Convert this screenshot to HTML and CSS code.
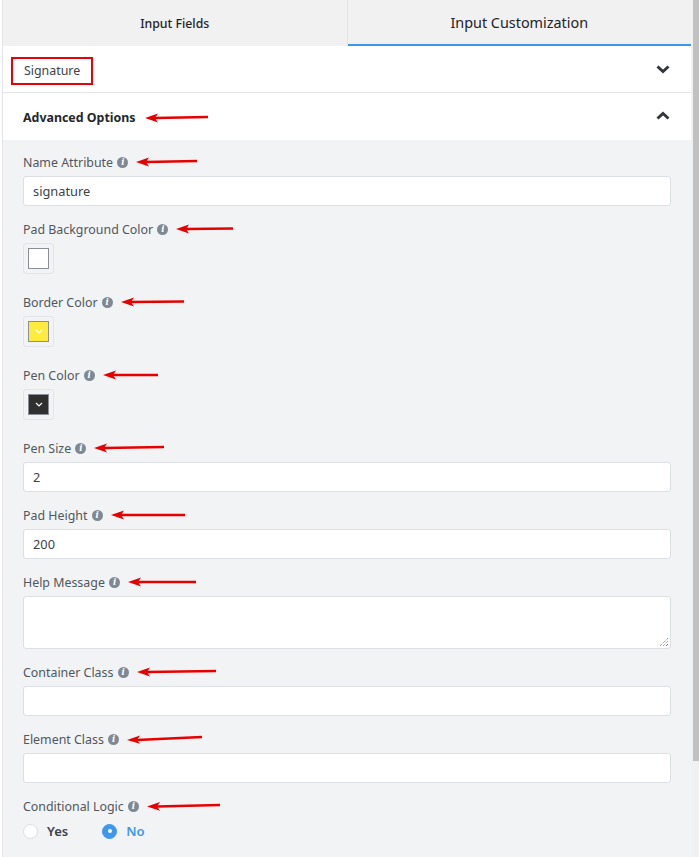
FILE: index.html
```html
<!DOCTYPE html>
<html>
<head>
<meta charset="utf-8">
<link rel="stylesheet" href="styles.css">
</head>
<body>
<div class="frame">
  <div class="panel">
    <div class="tabs">
      <div class="tab tab-left">Input Fields</div>
      <div class="tab tab-active">Input Customization</div>
    </div>

    <div class="row row-signature">
      <span class="mark-box">Signature</span>
      <svg class="chev" width="14" height="9" viewBox="0 0 14 9"><polyline points="1.5,1.5 7,6.5 12.5,1.5" fill="none" stroke="#33363b" stroke-width="3"/></svg>
    </div>

    <div class="row row-adv">
      <span class="adv-title">Advanced Options</span>
      <svg class="arrow" width="64" height="10" viewBox="0 0 64 10"><polygon points="0,5 13,0.5 10,5 13,9.5" fill="#e60000"/><line x1="10" y1="5" x2="63" y2="4" stroke="#e60000" stroke-width="2.4"/></svg>
      <svg class="chev chev-up" width="14" height="9" viewBox="0 0 14 9"><polyline points="1.5,7.5 7,2.5 12.5,7.5" fill="none" stroke="#33363b" stroke-width="3"/></svg>
    </div>

    <div class="content">
      <div class="field">
        <div class="label">Name Attribute <span class="info">i</span><svg class="arrow" width="62" height="10" viewBox="0 0 62 10"><polygon points="0,5 13,0.5 10,5 13,9.5" fill="#e60000"/><line x1="10" y1="5" x2="61" y2="4" stroke="#e60000" stroke-width="2.4"/></svg></div>
        <div class="input">signature</div>
      </div>

      <div class="field field-swatch">
        <div class="label">Pad Background Color <span class="info">i</span><svg class="arrow" width="58" height="10" viewBox="0 0 58 10"><polygon points="0,5 13,0.5 10,5 13,9.5" fill="#e60000"/><line x1="10" y1="5" x2="57" y2="4.5" stroke="#e60000" stroke-width="2.4"/></svg></div>
        <div class="swatch"><span class="swatch-in sw-white"></span></div>
      </div>

      <div class="field field-swatch">
        <div class="label">Border Color <span class="info">i</span><svg class="arrow" width="64" height="10" viewBox="0 0 64 10"><polygon points="0,5 13,0.5 10,5 13,9.5" fill="#e60000"/><line x1="10" y1="5" x2="63" y2="4.5" stroke="#e60000" stroke-width="2.4"/></svg></div>
        <div class="swatch"><span class="swatch-in sw-yellow"><svg width="8" height="5" viewBox="0 0 8 5"><polyline points="1,1 4,4 7,1" fill="none" stroke="#fff" stroke-width="1.2"/></svg></span></div>
      </div>

      <div class="field field-swatch">
        <div class="label">Pen Color <span class="info">i</span><svg class="arrow" width="56" height="10" viewBox="0 0 56 10"><polygon points="0,5 13,0.5 10,5 13,9.5" fill="#e60000"/><line x1="10" y1="5" x2="55" y2="5" stroke="#e60000" stroke-width="2.4"/></svg></div>
        <div class="swatch"><span class="swatch-in sw-dark"><svg width="8" height="5" viewBox="0 0 8 5"><polyline points="1,1 4,4 7,1" fill="none" stroke="#fff" stroke-width="1.2"/></svg></span></div>
      </div>

      <div class="field">
        <div class="label">Pen Size <span class="info">i</span><svg class="arrow" width="71" height="10" viewBox="0 0 71 10"><polygon points="0,5 13,0.5 10,5 13,9.5" fill="#e60000"/><line x1="10" y1="5" x2="70" y2="4" stroke="#e60000" stroke-width="2.4"/></svg></div>
        <div class="input">2</div>
      </div>

      <div class="field">
        <div class="label">Pad Height <span class="info">i</span><svg class="arrow" width="75" height="10" viewBox="0 0 75 10"><polygon points="0,5 13,0.5 10,5 13,9.5" fill="#e60000"/><line x1="10" y1="5" x2="74" y2="5" stroke="#e60000" stroke-width="2.4"/></svg></div>
        <div class="input">200</div>
      </div>

      <div class="field">
        <div class="label">Help Message <span class="info">i</span><svg class="arrow" width="69" height="10" viewBox="0 0 69 10"><polygon points="0,5 13,0.5 10,5 13,9.5" fill="#e60000"/><line x1="10" y1="5" x2="68" y2="5" stroke="#e60000" stroke-width="2.4"/></svg></div>
        <div class="textarea">
          <svg class="grip" width="10" height="10" viewBox="0 0 10 10"><line x1="1" y1="9" x2="9" y2="1" stroke="#777" stroke-width="1" stroke-dasharray="1 1"/><line x1="4" y1="9" x2="9" y2="4" stroke="#777" stroke-width="1" stroke-dasharray="1 1"/><line x1="7" y1="9" x2="9" y2="7" stroke="#777" stroke-width="1"/></svg>
        </div>
      </div>

      <div class="field">
        <div class="label">Container Class <span class="info">i</span><svg class="arrow" width="80" height="10" viewBox="0 0 80 10"><polygon points="0,5 13,0.5 10,5 13,9.5" fill="#e60000"/><line x1="10" y1="5" x2="79" y2="4" stroke="#e60000" stroke-width="2.4"/></svg></div>
        <div class="input"></div>
      </div>

      <div class="field">
        <div class="label">Element Class <span class="info">i</span><svg class="arrow" width="76" height="10" viewBox="0 0 76 10"><polygon points="0,6 13,1.5 10,6 13,9.8" fill="#e60000"/><line x1="10" y1="6" x2="75" y2="3" stroke="#e60000" stroke-width="2.4"/></svg></div>
        <div class="input"></div>
      </div>

      <div class="field">
        <div class="label">Conditional Logic <span class="info">i</span><svg class="arrow" width="74" height="10" viewBox="0 0 74 10"><polygon points="0,5.5 13,1 10,5.5 13,9.8" fill="#e60000"/><line x1="10" y1="5.5" x2="73" y2="4" stroke="#e60000" stroke-width="2.4"/></svg></div>
        <div class="radios">
          <label class="radio"><span class="dot"></span><span class="radio-text">Yes</span></label>
          <label class="radio radio-on"><span class="dot"></span><span class="radio-text">No</span></label>
        </div>
      </div>
    </div>
  </div>
  <div class="scrollbar"><div class="thumb"></div></div>
</div>
</body>
</html>
```

FILE: styles.css
```css
* { box-sizing: border-box; }

html, body {
  margin: 0;
  padding: 0;
  height: 100%;
}

body {
  font-family: "Noto Sans", "Open Sans", sans-serif;
  font-size: 12.4px;
  color: #3c434a;
  background: #ffffff;
}

.frame {
  display: flex;
  height: 857px;
  padding-left: 2px;
}

.panel {
  flex: 1;
  display: flex;
  flex-direction: column;
  background: #f2f3f5;
  border-left: 1px solid #e2e4e7;
  overflow: hidden;
}

.scrollbar {
  width: 8px;
  background: #f1f1f1;
  padding-left: 2px;
}

.thumb {
  width: 6px;
  height: 761px;
  background: #c1c1c1;
}

.tabs {
  display: flex;
  height: 46px;
  background: #f1f1f2;
}

.tab {
  flex: 1;
  display: flex;
  align-items: center;
  justify-content: center;
  color: #1d2327;
}

.tab-left {
  font-size: 12.3px;
  font-weight: 500;
  border-right: 1px solid #e4e4e6;
}

.tab-active {
  font-size: 14.4px;
  border-bottom: 2px solid #3d97ee;
  padding-top: 1px;
}

.row {
  display: flex;
  align-items: center;
  background: #ffffff;
  height: 47px;
  position: relative;
}

.row-signature {
  padding-left: 8px;
  border-bottom: 1px solid #e3e4e6;
}

.mark-box {
  border: 2.5px solid #e8000b;
  padding: 0 11px 0 11px;
  height: 28px;
  display: flex;
  align-items: center;
  color: #3c434a;
  font-size: 12.4px;
  margin-top: 3px;
}

.row-adv {
  padding-left: 20px;
  padding-top: 2px;
}

.adv-title {
  font-weight: 700;
  color: #23282d;
  font-size: 12.4px;
}

.row-adv .arrow {
  margin-left: 9px;
  margin-top: 1px;
}

.chev {
  position: absolute;
  right: 21px;
  top: 19px;
}

.chev-up {
  top: 18px;
}

.content {
  padding: 12px 20px 0 20px;
}

.field {
  margin-bottom: 13px;
}

.field-swatch {
  margin-bottom: 18px;
}

.label {
  display: flex;
  align-items: center;
  height: 20px;
  margin-bottom: 4px;
  color: #50575e;
  font-size: 12.4px;
  white-space: pre;
}

.info {
  display: inline-flex;
  align-items: center;
  justify-content: center;
  width: 11px;
  height: 11px;
  border-radius: 50%;
  background: #7e8993;
  color: #fff;
  font-size: 8.5px;
  font-weight: 700;
  font-style: italic;
  font-family: "DejaVu Serif", serif;
  margin-left: 1px;
  line-height: 1;
}

.label .arrow {
  margin-left: 8px;
}

.input {
  height: 30px;
  width: 648px;
  background: #ffffff;
  border: 1px solid #dcdfe4;
  border-radius: 3px;
  padding: 0 9px;
  display: flex;
  align-items: center;
  color: #3c434a;
  font-size: 12.8px;
}

.textarea {
  position: relative;
  height: 53px;
  width: 648px;
  background: #ffffff;
  border: 1px solid #dcdfe4;
  border-radius: 3px;
}

.grip {
  position: absolute;
  right: 1px;
  bottom: 1px;
}

.swatch {
  width: 31px;
  height: 31px;
  border: 1px solid #e3e5e8;
  border-radius: 3px;
  background: #f2f3f5;
  display: flex;
  align-items: center;
  justify-content: center;
}

.swatch-in {
  width: 21px;
  height: 21px;
  border: 1px solid #8a8f96;
  display: flex;
  align-items: center;
  justify-content: center;
}

.sw-white { background: #ffffff; }
.sw-yellow { background: #ffeb3b; }
.sw-dark { background: #2f2f2f; }

.radios {
  display: flex;
  align-items: center;
  gap: 34px;
  height: 22px;
}

.radio {
  display: flex;
  align-items: center;
  gap: 9px;
  font-weight: 600;
  font-size: 13px;
  color: #3c434a;
}

.dot {
  width: 15px;
  height: 15px;
  border-radius: 50%;
  background: #ffffff;
  border: 1px solid #dcdfe4;
  display: inline-block;
}

.radio-on .dot {
  background: #3d97ee;
  border-color: #3d97ee;
  position: relative;
}

.radio-on .dot::after {
  content: "";
  position: absolute;
  left: 4.5px;
  top: 4.5px;
  width: 4px;
  height: 4px;
  border-radius: 50%;
  background: #ffffff;
}

.radio-on .radio-text {
  color: #3d97ee;
}
```
